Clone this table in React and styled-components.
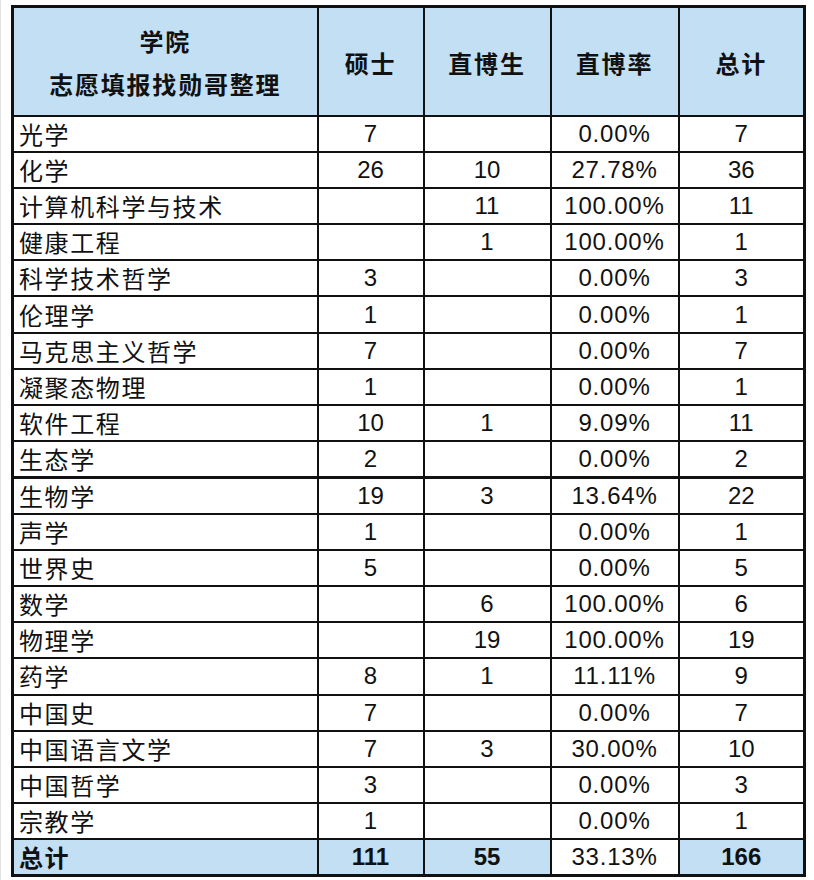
import React from 'react'
import styled, { createGlobalStyle } from 'styled-components'

const GlobalStyle = createGlobalStyle`
  html, body {
    margin: 0;
    padding: 0;
    background: #ffffff;
  }
`

const Sheet = styled.div`
  width: 814px;
  height: 880px;
  box-sizing: border-box;
  padding: 5px 0 0 10px;
  background: #fff;
  border-left: 1px solid #e2e2e2;
`

const Table = styled.table`
  border-collapse: collapse;
  table-layout: fixed;
  width: 792px;
  font-family: 'Liberation Sans', Arial, 'Noto Sans CJK SC', sans-serif;
  color: #111;
  border: 3px solid #111;
`

const HeadCell = styled.th`
  background: #c3dff3;
  border: 2px solid #111;
  font-family: 'Noto Sans CJK SC', 'Liberation Sans', sans-serif;
  font-weight: 700;
  font-size: 24px;
  letter-spacing: 1.8px;
  line-height: 43px;
  text-align: center;
  vertical-align: middle;
  padding: 2px 0 0 0;
`

const Row = styled.tr`
  height: 36.2px;
  ${({ $split }) => ($split ? 'border-bottom: 3.5px solid #111;' : '')}
`

const NameCell = styled.td`
  border: 2px solid #111;
  padding: 0 0 0 5px;
  font-family: 'Noto Sans CJK SC', sans-serif;
  font-size: 24px;
  letter-spacing: 1.6px;
  font-weight: ${({ $bold }) => ($bold ? 700 : 400)};
  background: ${({ $blue }) => ($blue ? '#c3dff3' : '#fff')};
  line-height: 30px;
  white-space: nowrap;
  vertical-align: middle;
`

const NumCell = styled.td`
  border: 2px solid #111;
  padding: 0;
  text-align: center;
  font-size: 24px;
  line-height: 30px;
  letter-spacing: ${({ $pct }) => ($pct ? '0.8px' : '0')};
  font-weight: ${({ $bold }) => ($bold ? 700 : 400)};
  background: ${({ $blue }) => ($blue ? '#c3dff3' : '#fff')};
  vertical-align: middle;
`

const rows = [
  ['光学', '7', '', '0.00%', '7'],
  ['化学', '26', '10', '27.78%', '36'],
  ['计算机科学与技术', '', '11', '100.00%', '11'],
  ['健康工程', '', '1', '100.00%', '1'],
  ['科学技术哲学', '3', '', '0.00%', '3'],
  ['伦理学', '1', '', '0.00%', '1'],
  ['马克思主义哲学', '7', '', '0.00%', '7'],
  ['凝聚态物理', '1', '', '0.00%', '1'],
  ['软件工程', '10', '1', '9.09%', '11'],
  ['生态学', '2', '', '0.00%', '2'],
  ['生物学', '19', '3', '13.64%', '22'],
  ['声学', '1', '', '0.00%', '1'],
  ['世界史', '5', '', '0.00%', '5'],
  ['数学', '', '6', '100.00%', '6'],
  ['物理学', '', '19', '100.00%', '19'],
  ['药学', '8', '1', '11.11%', '9'],
  ['中国史', '7', '', '0.00%', '7'],
  ['中国语言文学', '7', '3', '30.00%', '10'],
  ['中国哲学', '3', '', '0.00%', '3'],
  ['宗教学', '1', '', '0.00%', '1'],
]

export default function App() {
  return (
    <>
      <GlobalStyle />
      <Sheet>
        <Table>
          <colgroup>
            <col style={{ width: 305 }} />
            <col style={{ width: 106 }} />
            <col style={{ width: 127 }} />
            <col style={{ width: 128 }} />
            <col style={{ width: 126 }} />
          </colgroup>
          <thead>
            <tr style={{ height: 109 }}>
              <HeadCell>
                学院
                <br />
                志愿填报找勋哥整理
              </HeadCell>
              <HeadCell>硕士</HeadCell>
              <HeadCell>直博生</HeadCell>
              <HeadCell>直博率</HeadCell>
              <HeadCell>总计</HeadCell>
            </tr>
          </thead>
          <tbody>
            {rows.map((r, i) => (
              <Row key={r[0]} $split={i === 9}>
                <NameCell>{r[0]}</NameCell>
                <NumCell>{r[1]}</NumCell>
                <NumCell>{r[2]}</NumCell>
                <NumCell $pct>{r[3]}</NumCell>
                <NumCell>{r[4]}</NumCell>
              </Row>
            ))}
            <Row>
              <NameCell $bold $blue>总计</NameCell>
              <NumCell $bold $blue>111</NumCell>
              <NumCell $bold $blue>55</NumCell>
              <NumCell $pct>33.13%</NumCell>
              <NumCell $bold $blue>166</NumCell>
            </Row>
          </tbody>
        </Table>
      </Sheet>
    </>
  )
}
